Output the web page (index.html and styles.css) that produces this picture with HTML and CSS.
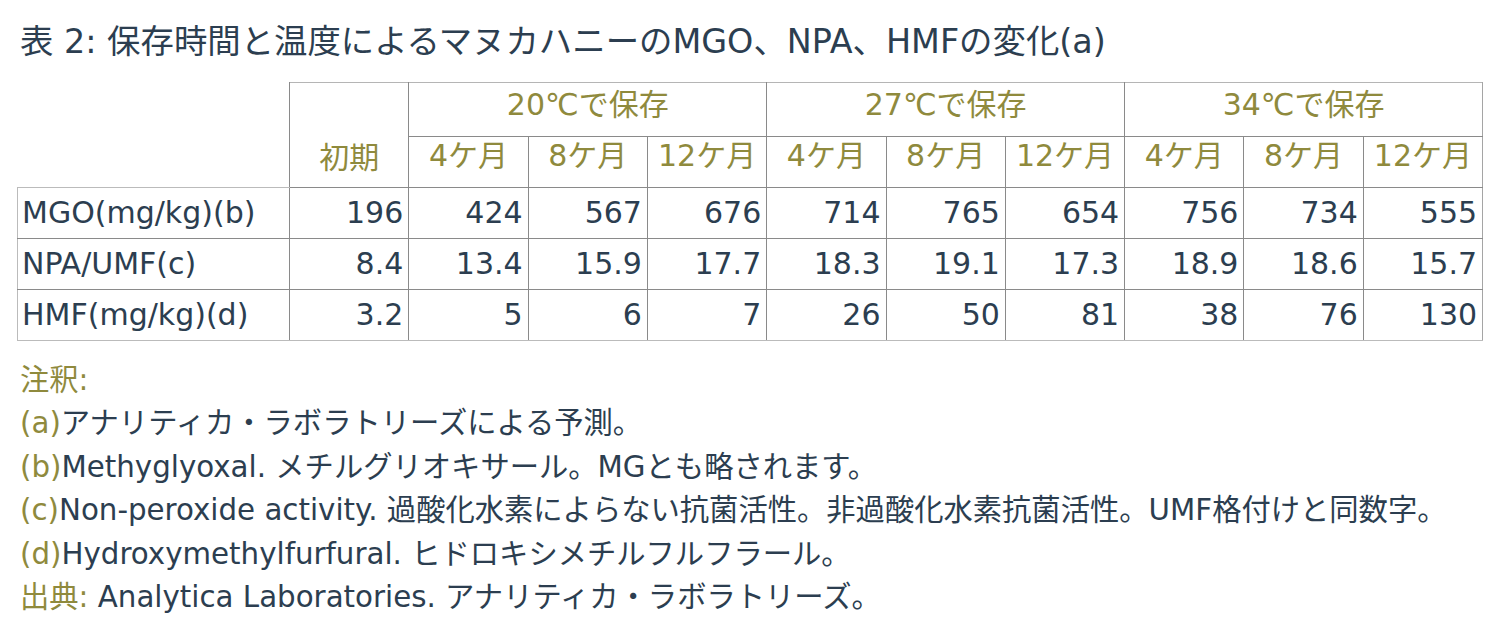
FILE: index.html
```html
<!DOCTYPE html>
<html lang="ja">
<head>
<meta charset="utf-8">
<link rel="stylesheet" href="styles.css">
</head>
<body>
<div class="page">
  <h1 class="title">表 2: 保存時間と温度によるマヌカハニーのMGO、NPA、HMFの変化(a)</h1>
  <table class="data">
    <colgroup>
      <col class="c-label">
      <col class="c-num"><col class="c-num"><col class="c-num"><col class="c-num"><col class="c-num">
      <col class="c-num"><col class="c-num"><col class="c-num"><col class="c-num"><col class="c-num">
    </colgroup>
    <thead>
      <tr class="h1row">
        <th class="blank" rowspan="2"></th>
        <th class="init" rowspan="2">初期</th>
        <th colspan="3">20℃で保存</th>
        <th colspan="3">27℃で保存</th>
        <th colspan="3">34℃で保存</th>
      </tr>
      <tr class="h2row">
        <th>4ケ月</th><th>8ケ月</th><th>12ケ月</th>
        <th>4ケ月</th><th>8ケ月</th><th>12ケ月</th>
        <th>4ケ月</th><th>8ケ月</th><th>12ケ月</th>
      </tr>
    </thead>
    <tbody>
      <tr>
        <td class="label">MGO(mg/kg)(b)</td>
        <td>196</td><td>424</td><td>567</td><td>676</td><td>714</td><td>765</td><td>654</td><td>756</td><td>734</td><td>555</td>
      </tr>
      <tr>
        <td class="label">NPA/UMF(c)</td>
        <td>8.4</td><td>13.4</td><td>15.9</td><td>17.7</td><td>18.3</td><td>19.1</td><td>17.3</td><td>18.9</td><td>18.6</td><td>15.7</td>
      </tr>
      <tr>
        <td class="label">HMF(mg/kg)(d)</td>
        <td>3.2</td><td>5</td><td>6</td><td>7</td><td>26</td><td>50</td><td>81</td><td>38</td><td>76</td><td>130</td>
      </tr>
    </tbody>
  </table>
  <div class="notes">
    <p class="accent">注釈:</p>
    <p><span class="accent">(a)</span>アナリティカ・ラボラトリーズによる予測。</p>
    <p><span class="accent">(b)</span>Methyglyoxal. メチルグリオキサール。MGとも略されます。</p>
    <p><span class="accent">(c)</span>Non-peroxide activity. 過酸化水素によらない抗菌活性。非過酸化水素抗菌活性。UMF格付けと同数字。</p>
    <p><span class="accent">(d)</span>Hydroxymethylfurfural. ヒドロキシメチルフルフラール。</p>
    <p><span class="accent">出典:</span> Analytica Laboratories. アナリティカ・ラボラトリーズ。</p>
  </div>
</div>
</body>
</html>
```

FILE: styles.css
```css
html, body {
  margin: 0;
  padding: 0;
  background: #ffffff;
}

body {
  font-family: "DejaVu Sans", "Noto Sans CJK JP", sans-serif;
  color: #2c3e50;
}

.page {
  padding: 0 0 0 17px;
}

.title {
  margin: 0;
  padding: 22px 0 0 3px;
  height: 82px;
  box-sizing: border-box;
  font-size: 33.4px;
  font-weight: normal;
  line-height: 40px;
  color: #2c3e50;
  white-space: nowrap;
}

.data {
  border-collapse: collapse;
  table-layout: fixed;
  width: 1465px;
  font-size: 30px;
}

.c-label {
  width: 272px;
}

.c-num {
  width: 119.3px;
}

.data th,
.data td {
  border: 1px solid #8a8a8a;
  padding: 0 5px;
  font-weight: normal;
  white-space: nowrap;
  overflow: visible;
  line-height: 36px;
}

.data th {
  color: #8f8a3d;
  text-align: center;
  padding: 0;
}

.data th.blank {
  border-top: none;
  border-left: none;
  border-bottom-color: #bbbbbb;
}

.data th.init {
  vertical-align: bottom;
  padding-bottom: 11px;
  border-left-color: #b5b5b5;
  border-top-color: #b5b5b5;
}

.h1row th {
  height: 43px;
  padding-bottom: 10px;
  border-top-color: #b5b5b5;
}

.h2row th {
  height: 38px;
  padding-bottom: 12px;
}

.data td {
  height: 50px;
  text-align: right;
  padding-right: 5px;
}

.data td.label {
  text-align: left;
  padding-left: 4px;
  border-left-color: #bbbbbb;
}

.data tbody tr:last-child td {
  border-bottom-color: #bbbbbb;
}

.data tr > :last-child {
  border-right-color: #a5a5a5;
}

.notes {
  margin-top: 18px;
  padding-left: 3px;
  font-size: 29.3px;
  line-height: 43.4px;
}

.notes p {
  margin: 0;
  white-space: nowrap;
}

.accent {
  color: #8f8a3d;
}
```
